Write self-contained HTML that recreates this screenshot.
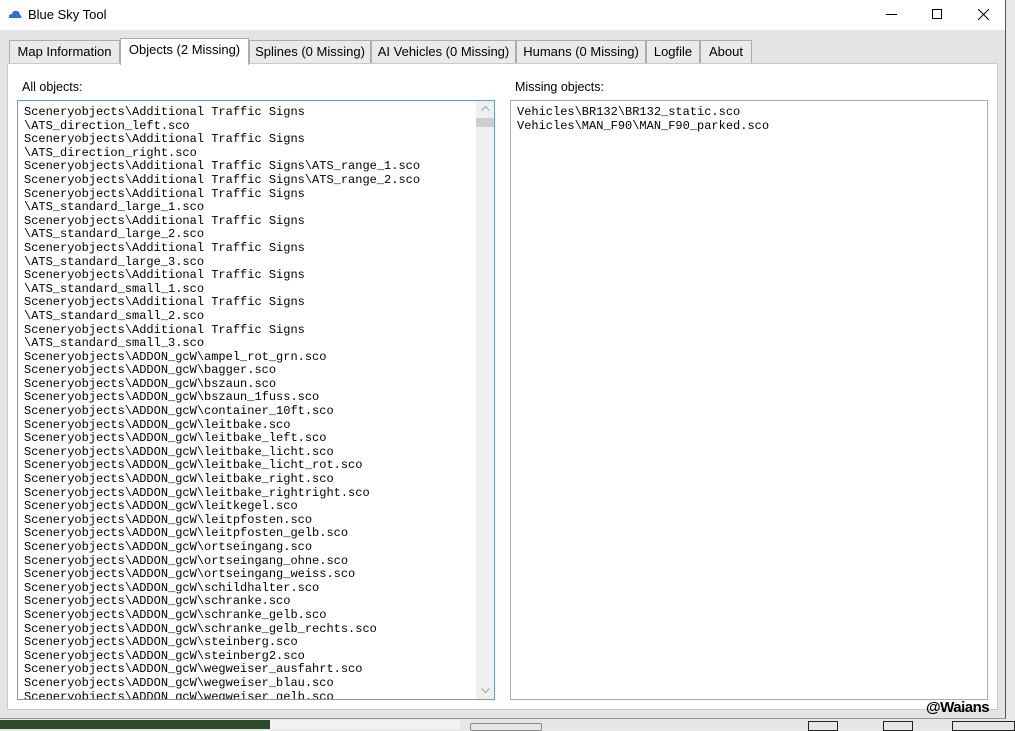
<!DOCTYPE html>
<html><head><meta charset="utf-8"><style>
*{margin:0;padding:0;box-sizing:border-box}
body{width:1015px;height:729px;overflow:hidden;background:#e8e8e8;font-family:"Liberation Sans","Noto Sans CJK SC",sans-serif;position:relative}
.win{position:absolute;left:0;top:0;width:1006px;height:719px;background:#e4e4e4;border-right:1px solid #555;border-bottom:1px solid #999}
.title{position:absolute;left:0;top:0;width:1005px;height:30px;background:#fff}
.title .t{position:absolute;left:28px;top:7px;font-size:13px;color:#000}
.tab{position:absolute;top:40px;height:24px;background:#eaeaea;border:1px solid #adadad;border-bottom:none;font-size:13px;padding:3px 0 0 0;text-align:center;color:#000}
.tab.sel{background:#fff;top:38px;height:27px;z-index:2;padding-top:3px}
.page{position:absolute;left:7px;top:63px;width:991px;height:647px;background:#fff;border:1px solid #c9c9c9}
.lbl{position:absolute;font-size:12.5px;color:#000}
.list{position:absolute;background:#fff;font-family:"Liberation Mono",monospace;font-size:12px;line-height:13.6px;white-space:pre;overflow:hidden;padding:5px 0 0 6px;color:#000}
</style></head><body>
<div class="win">
<div class="title">
<svg style="position:absolute;left:8px;top:10px" width="14" height="9" viewBox="0 0 14 9"><path d="M1 8 Q0 4 4 4 Q5 0 9 1 Q12 2 12 5 Q14 6 13 8 Z" fill="#2f6fd6"/></svg>
<span class="t">Blue Sky Tool</span>
<div style="position:absolute;left:886px;top:14px;width:11px;height:1px;background:#000"></div>
<div style="position:absolute;left:932px;top:9px;width:10px;height:10px;border:1px solid #000"></div>
<svg style="position:absolute;left:978px;top:9px" width="11" height="11"><path d="M0 0L11 11M11 0L0 11" stroke="#000" stroke-width="1"/></svg>
</div>
<div class="tab" style="left:9px;width:111px">Map Information</div>
<div class="tab sel" style="left:120px;width:129px">Objects (2 Missing)</div>
<div class="tab" style="left:249px;width:122px">Splines (0 Missing)</div>
<div class="tab" style="left:371px;width:145px">AI Vehicles (0 Missing)</div>
<div class="tab" style="left:516px;width:130px">Humans (0 Missing)</div>
<div class="tab" style="left:646px;width:54px">Logfile</div>
<div class="tab" style="left:700px;width:52px">About</div>
<div class="page"></div>
<div class="lbl" style="left:22px;top:80px">All objects:</div>
<div class="lbl" style="left:515px;top:80px">Missing objects:</div>
<div class="list" style="left:17px;top:100px;width:478px;height:600px;border:1px solid #6c9bd4">Sceneryobjects\Additional Traffic Signs
\ATS_direction_left.sco
Sceneryobjects\Additional Traffic Signs
\ATS_direction_right.sco
Sceneryobjects\Additional Traffic Signs\ATS_range_1.sco
Sceneryobjects\Additional Traffic Signs\ATS_range_2.sco
Sceneryobjects\Additional Traffic Signs
\ATS_standard_large_1.sco
Sceneryobjects\Additional Traffic Signs
\ATS_standard_large_2.sco
Sceneryobjects\Additional Traffic Signs
\ATS_standard_large_3.sco
Sceneryobjects\Additional Traffic Signs
\ATS_standard_small_1.sco
Sceneryobjects\Additional Traffic Signs
\ATS_standard_small_2.sco
Sceneryobjects\Additional Traffic Signs
\ATS_standard_small_3.sco
Sceneryobjects\ADDON_gcW\ampel_rot_grn.sco
Sceneryobjects\ADDON_gcW\bagger.sco
Sceneryobjects\ADDON_gcW\bszaun.sco
Sceneryobjects\ADDON_gcW\bszaun_1fuss.sco
Sceneryobjects\ADDON_gcW\container_10ft.sco
Sceneryobjects\ADDON_gcW\leitbake.sco
Sceneryobjects\ADDON_gcW\leitbake_left.sco
Sceneryobjects\ADDON_gcW\leitbake_licht.sco
Sceneryobjects\ADDON_gcW\leitbake_licht_rot.sco
Sceneryobjects\ADDON_gcW\leitbake_right.sco
Sceneryobjects\ADDON_gcW\leitbake_rightright.sco
Sceneryobjects\ADDON_gcW\leitkegel.sco
Sceneryobjects\ADDON_gcW\leitpfosten.sco
Sceneryobjects\ADDON_gcW\leitpfosten_gelb.sco
Sceneryobjects\ADDON_gcW\ortseingang.sco
Sceneryobjects\ADDON_gcW\ortseingang_ohne.sco
Sceneryobjects\ADDON_gcW\ortseingang_weiss.sco
Sceneryobjects\ADDON_gcW\schildhalter.sco
Sceneryobjects\ADDON_gcW\schranke.sco
Sceneryobjects\ADDON_gcW\schranke_gelb.sco
Sceneryobjects\ADDON_gcW\schranke_gelb_rechts.sco
Sceneryobjects\ADDON_gcW\steinberg.sco
Sceneryobjects\ADDON_gcW\steinberg2.sco
Sceneryobjects\ADDON_gcW\wegweiser_ausfahrt.sco
Sceneryobjects\ADDON_gcW\wegweiser_blau.sco
Sceneryobjects\ADDON_gcW\wegweiser_gelb.sco</div>
<div style="position:absolute;left:476px;top:101px;width:18px;height:598px;background:#f0f0f0"></div>
<div style="position:absolute;left:476px;top:118px;width:18px;height:9px;background:#cdcdcd"></div>
<svg style="position:absolute;left:481px;top:106px" width="9" height="5"><path d="M0.5 4.5L4.5 0.5L8.5 4.5" stroke="#a0a0a0" fill="none"/></svg>
<svg style="position:absolute;left:481px;top:688px" width="9" height="5"><path d="M0.5 0.5L4.5 4.5L8.5 0.5" stroke="#a0a0a0" fill="none"/></svg>
<div class="list" style="left:510px;top:100px;width:478px;height:600px;border:1px solid #adadad">Vehicles\BR132\BR132_static.sco
Vehicles\MAN_F90\MAN_F90_parked.sco</div>
</div>
<div style="position:absolute;left:0;top:720px;width:270px;height:9px;background:#2c4a2a"></div>
<div style="position:absolute;left:270px;top:720px;width:190px;height:9px;background:#f2f2f2"></div>
<div style="position:absolute;left:462px;top:720px;width:553px;height:9px;background:#e6e6e6"></div>
<div style="position:absolute;left:470px;top:723px;width:72px;height:8px;border:1px solid #888;border-radius:2px"></div>
<div style="position:absolute;left:808px;top:721px;width:30px;height:10px;border:1px solid #222"></div>
<div style="position:absolute;left:883px;top:721px;width:30px;height:10px;border:1px solid #222"></div>
<div style="position:absolute;left:952px;top:721px;width:63px;height:10px;border:1px solid #222"></div>
<div style="position:absolute;left:926px;top:699px;font-size:15px;font-weight:bold;color:#000;letter-spacing:-0.5px">@Waians</div>
</body></html>
